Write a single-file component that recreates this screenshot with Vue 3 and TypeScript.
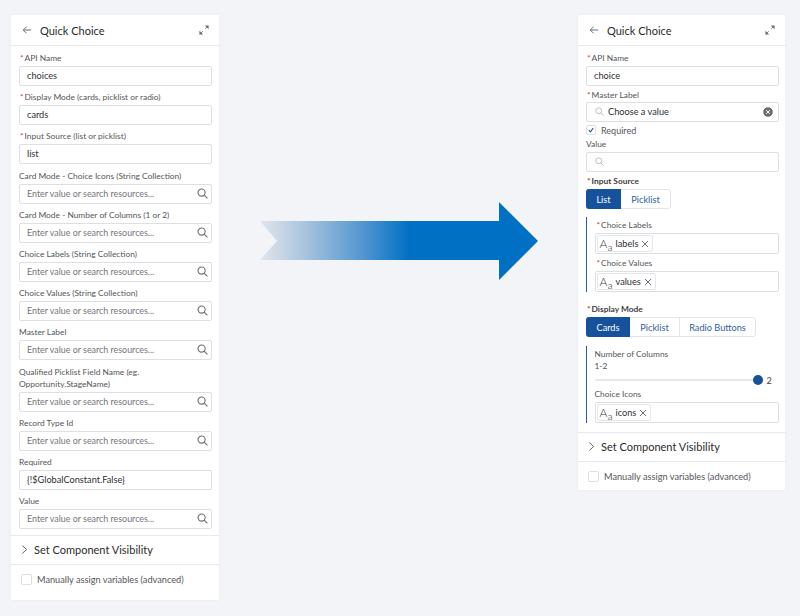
<script setup lang="ts">
interface Field {
  label: string;
  required?: boolean;
  value?: string;
}

const placeholder = 'Enter value or search resources...';

const leftFields: Field[] = [
  { label: 'API Name', required: true, value: 'choices' },
  { label: 'Display Mode (cards, picklist or radio)', required: true, value: 'cards' },
  { label: 'Input Source (list or picklist)', required: true, value: 'list' },
  { label: 'Card Mode - Choice Icons (String Collection)' },
  { label: 'Card Mode - Number of Columns (1 or 2)' },
  { label: 'Choice Labels (String Collection)' },
  { label: 'Choice Values (String Collection)' },
  { label: 'Master Label' },
  { label: 'Qualified Picklist Field Name (eg. Opportunity.StageName)' },
  { label: 'Record Type Id' },
  { label: 'Required', value: '{!$GlobalConstant.False}' },
  { label: 'Value' },
];
</script>

<template>
  <div class="page">
    <section class="panel">
      <header class="head">
        <svg class="back" viewBox="0 0 12 12"><path d="M11 6H1.5M5.5 2 1.5 6l4 4" /></svg>
        <h1>Quick Choice</h1>
        <svg class="expand" viewBox="0 0 12 12"><path d="M1 11 4.5 7.5M11 1 7.5 4.5" /><path class="fill" d="M0.5 7V11.5H5zM11.5 5V0.5H7z" /></svg>
      </header>
      <div class="fields">
        <div v-for="f in leftFields" :key="f.label" class="field">
          <label :class="{ req: f.required }"><i v-if="f.required">*</i>{{ f.label }}</label>
          <div v-if="f.value" class="input">{{ f.value }}</div>
          <div v-else class="input empty">
            <span>{{ placeholder }}</span>
            <svg class="search" viewBox="0 0 12 12"><circle cx="5" cy="5" r="3.9" /><path d="m7.8 7.8 3.6 3.6" /></svg>
          </div>
        </div>
      </div>
      <div class="visibility">
        <svg class="chevron" viewBox="0 0 8 12"><path d="m1.5 1.5 5 4.5-5 4.5" /></svg>
        Set Component Visibility
      </div>
      <div class="manual"><span class="box"></span>Manually assign variables (advanced)</div>
    </section>

    <svg class="arrow" viewBox="259 201 280 80">
      <defs>
        <linearGradient id="fade" gradientUnits="userSpaceOnUse" x1="260" y1="0" x2="410" y2="0">
          <stop offset="0" stop-color="#e2e5eb" />
          <stop offset="0.3" stop-color="#a9c4de" />
          <stop offset="0.7" stop-color="#4f94cf" />
          <stop offset="1" stop-color="#0070c4" />
        </linearGradient>
      </defs>
      <path fill="url(#fade)" d="M260 221H499V202L538 241 499 280V260H260L277 241Z" />
    </svg>

    <section class="panel right">
      <header class="head">
        <svg class="back" viewBox="0 0 12 12"><path d="M11 6H1.5M5.5 2 1.5 6l4 4" /></svg>
        <h1>Quick Choice</h1>
        <svg class="expand" viewBox="0 0 12 12"><path d="M1 11 4.5 7.5M11 1 7.5 4.5" /><path class="fill" d="M0.5 7V11.5H5zM11.5 5V0.5H7z" /></svg>
      </header>
      <div class="form">
        <label class="req first"><i>*</i>API Name</label>
        <div class="input">choice</div>

        <label class="req master"><i>*</i>Master Label</label>
        <div class="input lookup">
          <svg class="search light" viewBox="0 0 12 12"><circle cx="5" cy="5" r="3.9" /><path d="m7.8 7.8 3.6 3.6" /></svg>
          <span>Choose a value</span>
          <svg class="clear" viewBox="0 0 10 10"><circle cx="5" cy="5" r="4.8" /><path d="m3.2 3.2 3.6 3.6M6.8 3.2 3.2 6.8" /></svg>
        </div>
        <div class="check">
          <span class="box small"><svg viewBox="0 0 10 10"><path d="m2.3 5.3 2 2 3.4-4.6" /></svg></span>Required
        </div>

        <label class="value-label">Value</label>
        <div class="input lookup">
          <svg class="search light" viewBox="0 0 12 12"><circle cx="5" cy="5" r="3.9" /><path d="m7.8 7.8 3.6 3.6" /></svg>
        </div>

        <label class="req strong source"><i>*</i>Input Source</label>
        <div class="segments">
          <span class="on list">List</span>
          <span class="pick-a">Picklist</span>
        </div>

        <div class="group first-group">
          <label class="req"><i>*</i>Choice Labels</label>
          <div class="pills">
            <span class="pill">
              <b>A<small>a</small></b>labels
              <svg class="remove" viewBox="0 0 8 8"><path d="m1 1 6 6M7 1 1 7" /></svg>
            </span>
          </div>
          <label class="req second"><i>*</i>Choice Values</label>
          <div class="pills">
            <span class="pill">
              <b>A<small>a</small></b>values
              <svg class="remove" viewBox="0 0 8 8"><path d="m1 1 6 6M7 1 1 7" /></svg>
            </span>
          </div>
        </div>

        <label class="req strong display"><i>*</i>Display Mode</label>
        <div class="segments">
          <span class="on cards">Cards</span>
          <span class="pick-b">Picklist</span>
          <span class="radio">Radio Buttons</span>
        </div>

        <div class="group second-group">
          <label>Number of Columns</label>
          <label class="range-label">1-2</label>
          <div class="slider">
            <div class="track"><span class="knob"></span></div>
            <span class="count">2</span>
          </div>
          <label class="icons-label">Choice Icons</label>
          <div class="pills">
            <span class="pill">
              <b>A<small>a</small></b>icons
              <svg class="remove" viewBox="0 0 8 8"><path d="m1 1 6 6M7 1 1 7" /></svg>
            </span>
          </div>
        </div>
      </div>
      <div class="visibility">
        <svg class="chevron" viewBox="0 0 8 12"><path d="m1.5 1.5 5 4.5-5 4.5" /></svg>
        Set Component Visibility
      </div>
      <div class="manual short"><span class="box"></span>Manually assign variables (advanced)</div>
    </section>
  </div>
</template>

<style>
html,
body {
  margin: 0;
  background: #f3f4f7;
}
</style>

<style scoped>
.page {
  display: flex;
  align-items: flex-start;
  width: 800px;
  height: 616px;
  padding: 15px 0 0 11px;
  box-sizing: border-box;
  background: #f3f4f7;
  font-family: Lato, "Open Sans", "Liberation Sans", sans-serif;
  color: #3e3e3c;
  overflow: hidden;
}

.panel {
  width: 208px;
  flex: none;
  background: #fff;
  box-shadow: 0 0 3px rgba(30, 40, 60, 0.05);
}

.panel.right {
  width: 207px;
}

.arrow {
  width: 280px;
  height: 80px;
  flex: none;
  margin: 186px 39px 0 40px;
}

.head {
  display: flex;
  align-items: center;
  height: 31px;
  box-sizing: border-box;
  padding: 0 10px 0 11px;
  border-bottom: 1px solid #e8e9ec;
}

.head h1 {
  flex: 1;
  margin: 0 0 0 8px;
  font-size: 11px;
  font-weight: 400;
  color: #2b2b2b;
}

.back {
  width: 10px;
  height: 10px;
  fill: none;
  stroke: #6b6d70;
  stroke-width: 1.2;
}

.expand {
  width: 10px;
  height: 10px;
  fill: none;
  stroke: #6b6d70;
  stroke-width: 1;
}

.expand .fill {
  fill: #6b6d70;
  stroke: none;
}

.fields {
  display: flex;
  flex-direction: column;
  gap: 5.2px;
  padding: 6px 7px 6px 8px;
}

label {
  display: block;
  font-size: 8.4px;
  line-height: 12px;
  margin-bottom: 2px;
  color: #54565a;
}

label.req {
  padding-left: 1px;
}

label i {
  font-style: normal;
  color: #c23934;
  margin-right: 1px;
}

.input {
  display: flex;
  align-items: center;
  height: 20px;
  box-sizing: border-box;
  padding: 0 7px 1px;
  background: #fff;
  border: 1px solid #dddfe3;
  border-radius: 2px;
  font-size: 9.2px;
  color: #2f3033;
}

.input.empty {
  justify-content: space-between;
  font-size: 8.9px;
  color: #72757a;
  padding-right: 3px;
}

.search {
  width: 11px;
  height: 11px;
  flex: none;
  fill: none;
  stroke: #6b6d70;
  stroke-width: 1.2;
}

.search.light {
  stroke: #a8abb0;
  width: 9px;
  height: 9px;
  margin-right: 4px;
  stroke-width: 1;
}

.visibility {
  display: flex;
  align-items: center;
  height: 29px;
  box-sizing: border-box;
  padding: 0 0 2px 10px;
  border-top: 1px solid #e8e9ec;
  font-size: 11px;
  color: #2b2b2b;
}

.chevron {
  width: 7px;
  height: 11px;
  margin-right: 6px;
  fill: none;
  stroke: #5f6165;
  stroke-width: 1.1;
}

.manual {
  display: flex;
  align-items: center;
  height: 36px;
  padding: 0 0 6px 10px;
  box-sizing: border-box;
  border-top: 1px solid #e8e9ec;
  font-size: 9.2px;
  color: #54565a;
}

.manual.short {
  height: 29px;
  padding-bottom: 0;
}

.box {
  width: 11px;
  height: 11px;
  box-sizing: border-box;
  margin-right: 5px;
  background: #fff;
  border: 1px solid #dddfe3;
  border-radius: 2px;
}

.form {
  padding: 6px 6px 9px 8px;
}

.form .master {
  margin-top: 3px;
  margin-bottom: 1px;
}

.lookup {
  padding-left: 8px;
}

.lookup .clear {
  width: 10px;
  height: 10px;
  margin-left: auto;
  margin-right: -2px;
  fill: #6b6d70;
  stroke: #fff;
  stroke-width: 1;
}

.lookup .clear circle {
  stroke: none;
}

.check {
  display: flex;
  align-items: center;
  height: 12px;
  margin-top: 2px;
  font-size: 9px;
  color: #54565a;
}

.box.small {
  display: flex;
  width: 10px;
  height: 10px;
  margin-right: 5px;
}

.box.small svg {
  width: 8px;
  height: 8px;
  fill: none;
  stroke: #16529b;
  stroke-width: 1.3;
}

.value-label {
  margin: 2px 0 2px;
}

.strong {
  font-weight: 700;
  color: #3e3e3c;
}

.source {
  margin: 3px 0 2px;
}

.display {
  margin: 11px 0 2px;
}

.segments {
  display: flex;
  width: fit-content;
  height: 20px;
  box-sizing: border-box;
  border: 1px solid #e2e4e8;
  border-radius: 3px;
  font-size: 9.2px;
  color: #2f5f9e;
  background: #fff;
}

.segments span {
  display: flex;
  align-items: center;
  justify-content: center;
}

.segments .on {
  margin: -1px 0 -1px -1px;
  background: #16529b;
  color: #fff;
  border-radius: 3px 0 0 3px;
}

.list {
  width: 35px;
}

.pick-a {
  width: 49px;
}

.cards {
  width: 44px;
}

.pick-b {
  width: 49px;
  border-right: 1px solid #e2e4e8;
}

.radio {
  width: 75px;
}

.group {
  margin-top: 8px;
  padding-left: 7.5px;
  border-left: 1.5px solid #2a5d9c;
}

.first-group {
  height: 75px;
}

.first-group .req {
  padding-left: 2px;
}

.first-group label:first-child {
  padding-top: 2px;
}

.group .second {
  margin-top: 3px;
}

.second-group {
  margin-top: 9px;
  height: 77px;
}

.second-group > label:first-child {
  padding-top: 2px;
  margin-bottom: 0;
}

.range-label {
  margin-bottom: 0;
}

.slider {
  display: flex;
  align-items: center;
  height: 16px;
}

.track {
  position: relative;
  width: 163px;
  height: 2px;
  border-radius: 1px;
  background: #e6e7ea;
}

.knob {
  position: absolute;
  right: -5px;
  top: -4px;
  width: 10px;
  height: 10px;
  border-radius: 50%;
  background: #16529b;
}

.count {
  margin-left: 9px;
  font-size: 9.2px;
}

.pills {
  display: flex;
  align-items: center;
  width: 184px;
  height: 21px;
  box-sizing: border-box;
  padding-left: 1px;
  border: 1px solid #dddfe3;
  border-radius: 2px;
}

.pill {
  display: flex;
  align-items: center;
  height: 17px;
  box-sizing: border-box;
  padding: 0 3px 0 2px;
  border: 1px solid #e5e6e9;
  border-radius: 2px;
  font-size: 9.2px;
  color: #2f3033;
}

.pill b {
  display: inline-block;
  width: 16px;
  font-weight: 300;
  font-size: 12px;
  line-height: 13px;
  color: #3e3e3c;
}

.pill small {
  font-size: 10.5px;
  position: relative;
  top: 3px;
}

.remove {
  width: 8px;
  height: 8px;
  margin-left: 3px;
  fill: none;
  stroke: #5f6165;
  stroke-width: 0.9;
}
</style>
